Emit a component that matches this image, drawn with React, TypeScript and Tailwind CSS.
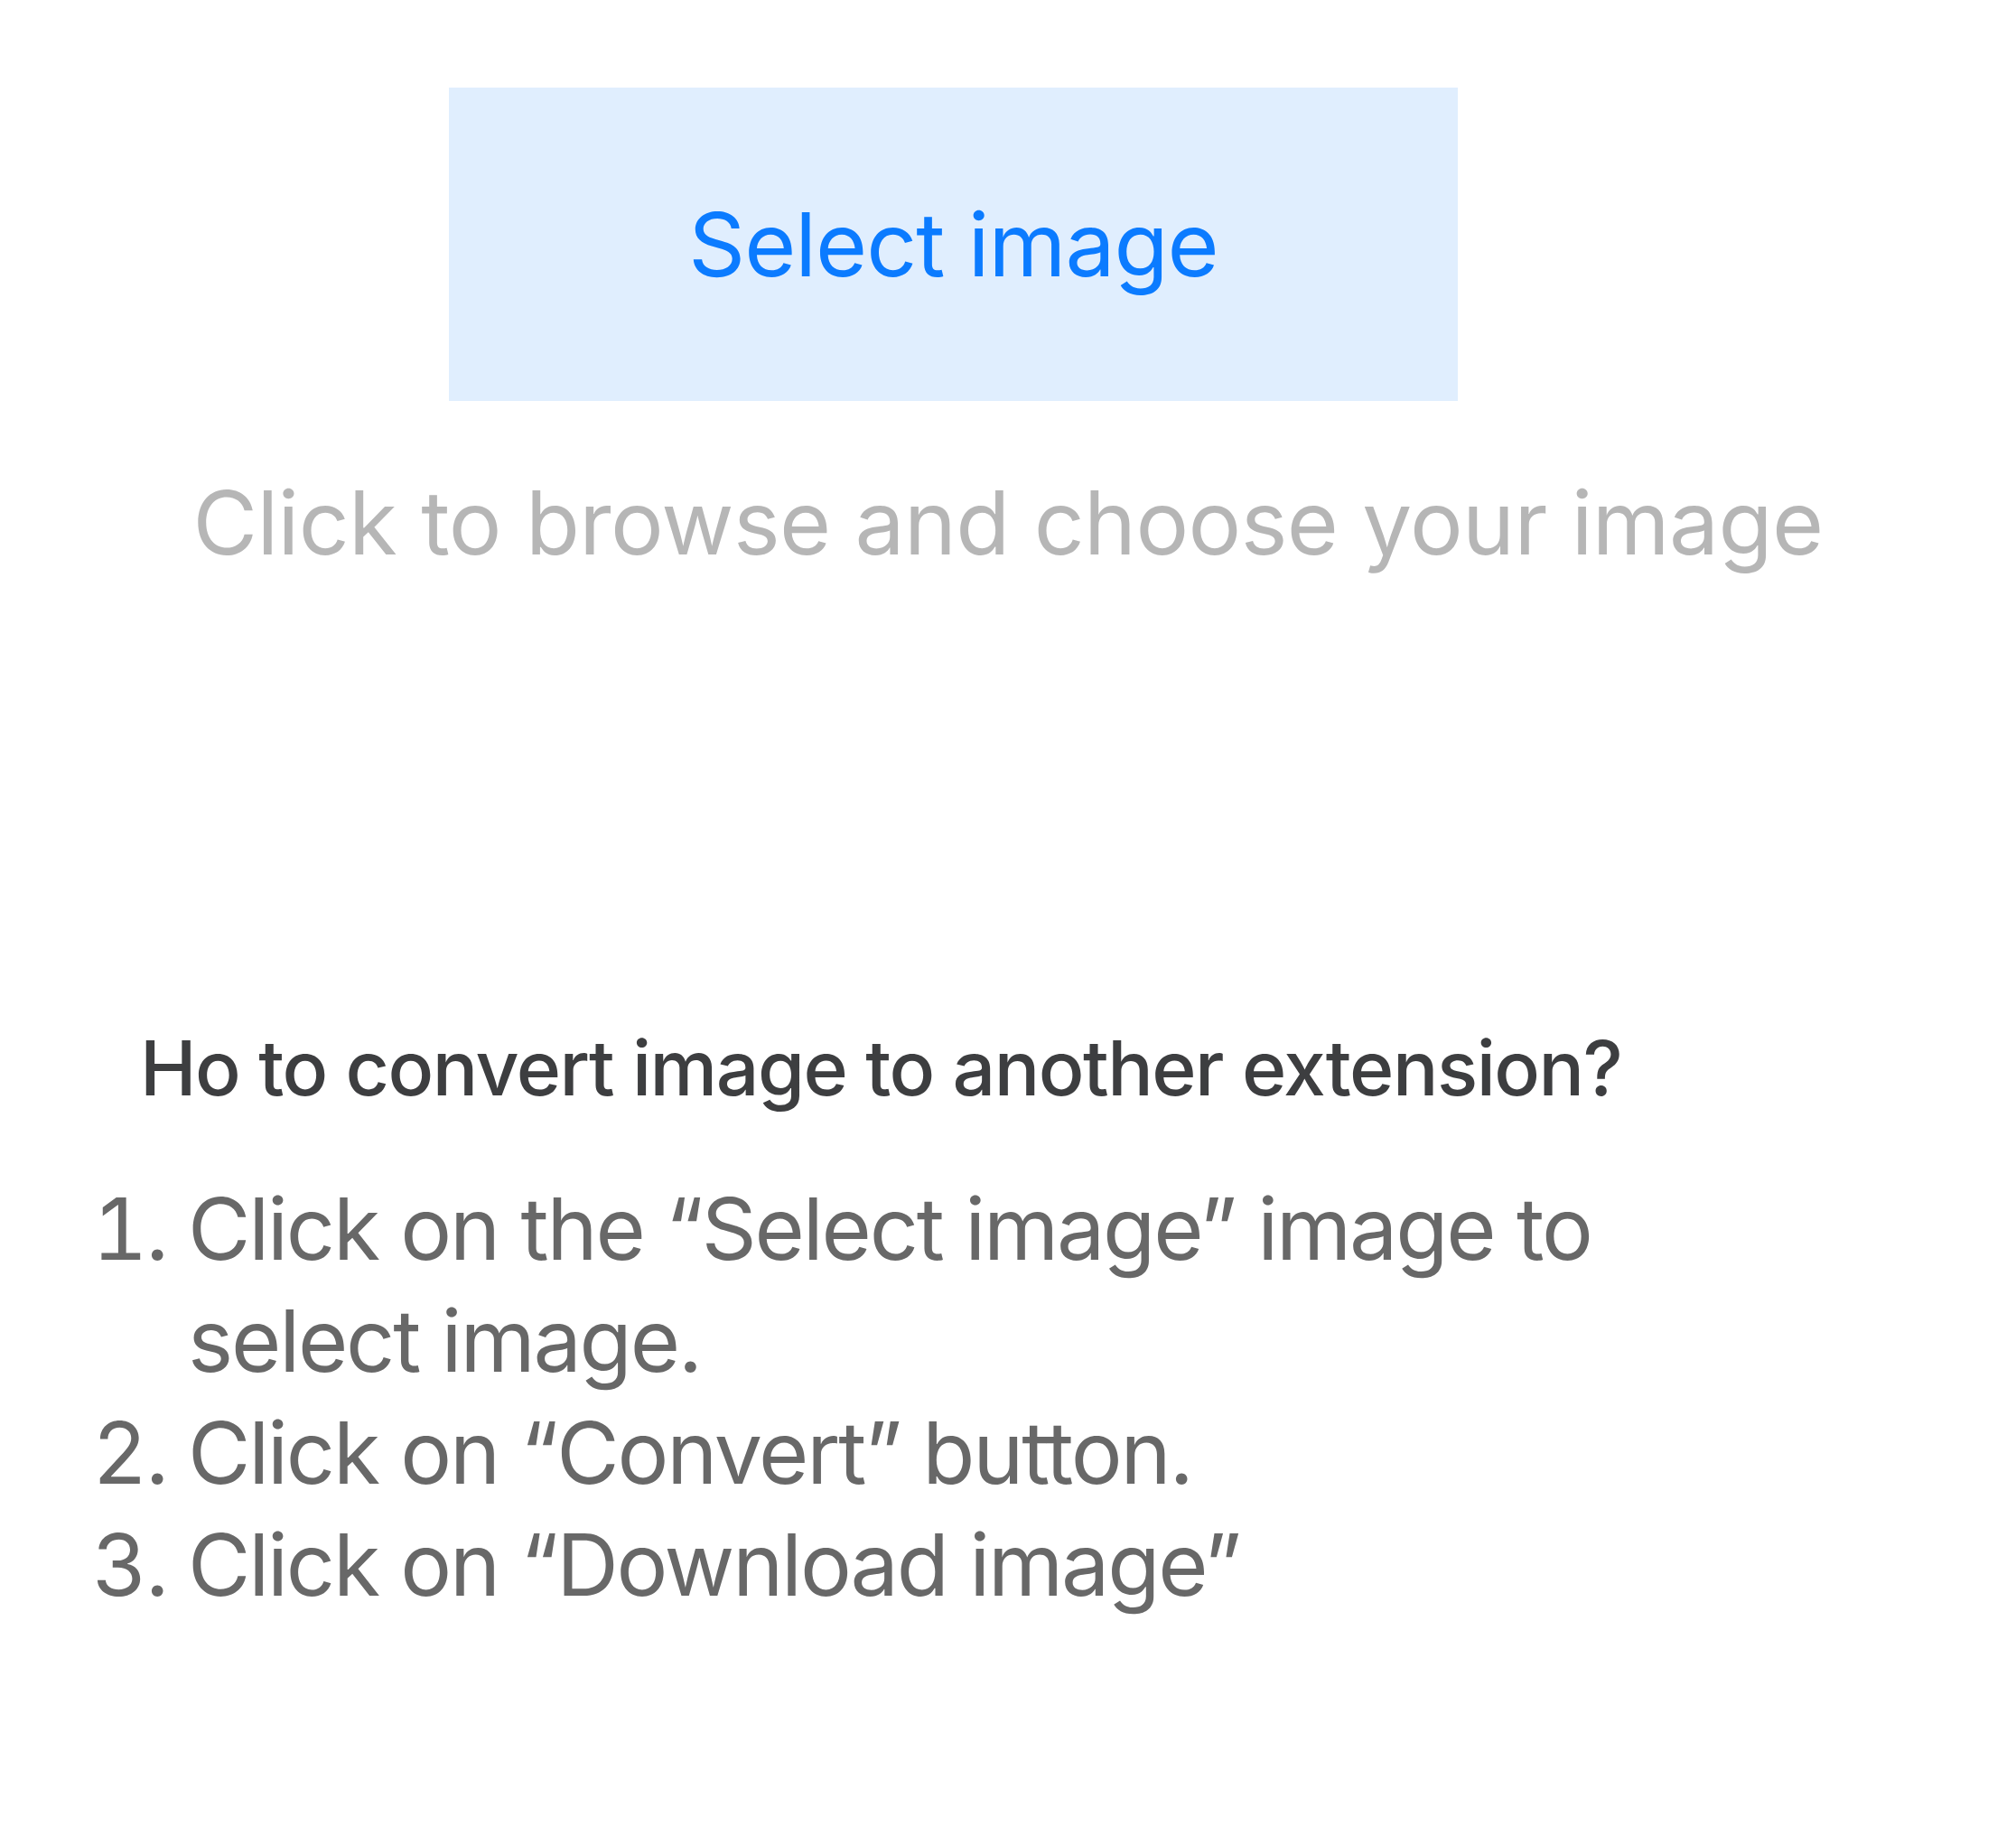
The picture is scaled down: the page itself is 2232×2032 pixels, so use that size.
import React from "react";

const steps = [
  "Click on the “Select image” image to select image.",
  "Click on “Convert” button.",
  "Click on “Download image”",
];

export default function App() {
  return (
    <div className="min-h-screen w-full bg-white font-['Inter',sans-serif]">
      <div className="pt-[97px]">
        <button className="ml-[497px] flex h-[347px] w-[1117px] items-center justify-center bg-[#e0eefe] text-[98px] leading-none tracking-[-1px] text-[#0b7bff]">
          Select image
        </button>
        <p className="mt-[75px] text-center text-[98px] leading-[120px] tracking-[-0.6px] text-[#b6b6b6]">
          Click to browse and choose your image
        </p>
      </div>

      <div className="mt-[494px] pl-[155px]">
        <h2 className="text-[84px] font-medium leading-[100px] tracking-[-1.5px] text-[#3d3e40]">
          Ho to convert image to another extension?
        </h2>
      </div>

      <ol className="mt-[66px] ml-[208px] w-[1720px] list-outside list-decimal text-[95px] leading-[124px] tracking-[-2.2px] text-[#686868]">
        {steps.map((s) => (
          <li key={s}>{s}</li>
        ))}
      </ol>
    </div>
  );
}
